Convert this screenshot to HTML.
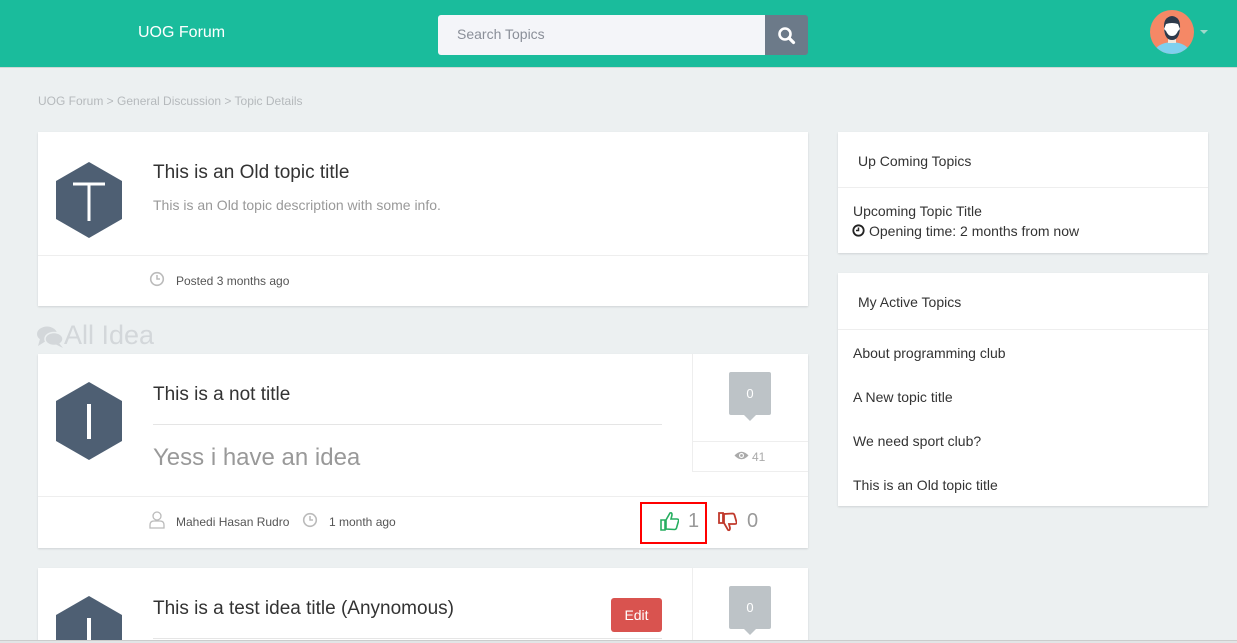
<!DOCTYPE html>
<html style="width:1237px;height:643px;overflow:hidden"><head><meta charset="utf-8"><style>
*{margin:0;padding:0;box-sizing:border-box}
body{width:1237px;height:643px;overflow:hidden;background:#ecf0f1;font-family:"Liberation Sans",sans-serif;position:relative}
.a{position:absolute}
.card{position:absolute;background:#fff;box-shadow:0 1px 2px rgba(0,0,0,.12)}
.t{font-family:"Liberation Sans",sans-serif}
</style></head><body>
<div class="a" style="left:0;top:0;width:1237px;height:68px;background:#1abc9c;border-bottom:1px solid #cfd8d6"></div>
<div class="a" style="left:138px;top:24px;color:#fff;font-size:16px">UOG Forum</div>
<div class="a" style="left:438px;top:15px;width:328px;height:40px;background:#f4f5f9;border-radius:3px 0 0 3px"></div>
<div class="a" style="left:457px;top:26px;color:#8a8f99;font-size:14px">Search Topics</div>
<div class="a" style="left:765px;top:15px;width:43px;height:40px;background:#6c7a89;border-radius:0 3px 3px 0"></div>
<svg class="a" style="left:777px;top:26px" width="19" height="19" viewBox="0 0 19 19"><circle cx="8" cy="8" r="5.5" fill="none" stroke="#fff" stroke-width="2.6"/><path d="M12 12l4.5 4.5" stroke="#fff" stroke-width="3.2" stroke-linecap="round"/></svg>
<svg class="a" style="left:1149px;top:9px" width="46" height="46" viewBox="0 0 46 46"><defs><clipPath id="c"><circle cx="23" cy="23" r="22"/></clipPath></defs><circle cx="23" cy="23" r="22" fill="#f58866"/><g clip-path="url(#c)"><path d="M4 46 Q6 34 23 33 Q40 34 42 46Z" fill="#7fd0ef"/><rect x="19" y="26" width="8" height="8" fill="#f2e7dc"/><ellipse cx="23" cy="20" rx="8" ry="10" fill="#fff"/><path d="M15 20 Q14 8 23 7 Q32 8 31 20 L29 15 Q23 13 17 15Z" fill="#2d3a4b"/><path d="M15 20 Q16 31 23 31 Q30 31 31 20 L29 22 Q27 27 23 27 Q19 27 17 22Z" fill="#2d3a4b"/></g></svg>
<div class="a" style="left:1200px;top:30px;width:0;height:0;border-left:4px solid transparent;border-right:4px solid transparent;border-top:4px solid #9fd9cb"></div>

<div class="a" style="left:38px;top:94px;color:#b5b9bc;font-size:12px">UOG Forum &gt; General Discussion &gt; Topic Details</div>

<div class="card" style="left:38px;top:132px;width:770px;height:174px"></div>
<svg class="a" style="left:56px;top:162px" width="66" height="76" viewBox="0 0 66 76"><polygon points="33,0 66,19 66,57 33,76 0,57 0,19" fill="#4e5f73"/><path d="M17 22h32M33 22v37" stroke="#fff" stroke-width="3"/></svg>
<div class="a t" style="left:153px;top:162px;font-size:19px;color:#333">This is an Old topic title</div>
<div class="a" style="left:153px;top:197px;font-size:14px;color:#999">This is an Old topic description with some info.</div>
<div class="a" style="left:38px;top:255px;width:770px;height:1px;background:#eee"></div>
<svg class="a" style="left:149px;top:271px" width="16" height="16" viewBox="0 0 16 16"><circle cx="8" cy="8" r="6.3" fill="none" stroke="#bbb" stroke-width="1.6"/><path d="M8 4v4h3" fill="none" stroke="#bbb" stroke-width="1.5"/></svg>
<div class="a" style="left:176px;top:274px;font-size:12px;color:#555">Posted 3 months ago</div>

<svg class="a" style="left:37px;top:325px" width="28" height="24" viewBox="0 0 28 24"><ellipse cx="10" cy="9" rx="10" ry="7.5" fill="#d3d7da"/><path d="M3 14 L1 21 L9 16Z" fill="#d3d7da"/><ellipse cx="17" cy="14" rx="9" ry="6.5" fill="#d3d7da" stroke="#ecf0f1" stroke-width="1.5"/><path d="M22 18 L26 23 L18 19Z" fill="#d3d7da"/></svg>
<div class="a" style="left:64px;top:320px;font-size:27px;color:#d3d7da">All Idea</div>

<div class="card" style="left:38px;top:354px;width:770px;height:194px"></div>
<svg class="a" style="left:56px;top:382px" width="66" height="78" viewBox="0 0 66 78"><polygon points="33,0 66,19 66,59 33,78 0,59 0,19" fill="#4e5f73"/><rect x="31" y="22" width="4" height="35" fill="#fff"/></svg>
<div class="a t" style="left:153px;top:384px;font-size:19px;color:#333">This is a not title</div>
<div class="a" style="left:153px;top:424px;width:509px;height:1px;background:#e5e5e5"></div>
<div class="a t" style="left:153px;top:444px;font-size:24px;color:#999">Yess i have an idea</div>
<div class="a" style="left:692px;top:354px;width:1px;height:117px;background:#eee"></div>
<div class="a" style="left:692px;top:441px;width:116px;height:1px;background:#eee"></div>
<div class="a" style="left:692px;top:471px;width:116px;height:1px;background:#eee"></div>
<div class="a" style="left:729px;top:372px;width:42px;height:43px;background:#bdc3c7;border-radius:2px;color:#fff;font-size:13px;text-align:center;line-height:43px">0</div>
<div class="a" style="left:744px;top:415px;border-left:6px solid transparent;border-right:6px solid transparent;border-top:6px solid #bdc3c7"></div>
<svg class="a" style="left:734px;top:450px" width="15" height="11" viewBox="0 0 15 11"><path d="M0.5 5.5Q7.5 -2 14.5 5.5Q7.5 13 0.5 5.5Z" fill="#aaa"/><circle cx="7.5" cy="5.5" r="2.5" fill="#fff"/><circle cx="7.5" cy="5.5" r="1.4" fill="#aaa"/></svg>
<div class="a" style="left:752px;top:450px;font-size:12px;color:#aaa">41</div>
<div class="a" style="left:38px;top:496px;width:770px;height:1px;background:#eee"></div>
<svg class="a" style="left:149px;top:511px" width="16" height="18" viewBox="0 0 16 18"><circle cx="8" cy="5" r="4" fill="none" stroke="#bbb" stroke-width="1.3"/><path d="M1 17v-3q0-4 4-4h6q4 0 4 4v3z" fill="none" stroke="#bbb" stroke-width="1.3"/></svg>
<div class="a" style="left:176px;top:515px;font-size:12px;color:#555">Mahedi Hasan Rudro</div>
<svg class="a" style="left:302px;top:512px" width="16" height="16" viewBox="0 0 16 16"><circle cx="8" cy="8" r="6.3" fill="none" stroke="#bbb" stroke-width="1.6"/><path d="M8 4v4h3" fill="none" stroke="#bbb" stroke-width="1.5"/></svg>
<div class="a" style="left:329px;top:515px;font-size:12px;color:#555">1 month ago</div>
<div class="a" style="left:640px;top:502px;width:67px;height:42px;border:2px solid #f00"></div>
<svg class="a" style="left:660px;top:511px" width="19" height="20" viewBox="0 0 19 20"><path d="M1 9h4v10H1z M6 18V9l4-7q2-1 2 2l-1 4h6q2 0 1.5 2l-2 7q-.5 1.5-2 1.5z" fill="none" stroke="#27ae60" stroke-width="1.6"/></svg>
<div class="a" style="left:688px;top:510px;font-size:20px;color:#999">1</div>
<svg class="a" style="left:718px;top:512px" width="19" height="20" viewBox="0 0 19 20"><path d="M1 1h4v10H1z M6 2v9l4 7q2 1 2-2l-1-4h6q2 0 1.5-2l-2-7q-.5-1.5-2-1.5z" fill="none" stroke="#c0392b" stroke-width="1.8"/></svg>
<div class="a" style="left:747px;top:510px;font-size:20px;color:#999">0</div>

<div class="card" style="left:38px;top:568px;width:770px;height:75px"></div>
<div class="a" style="left:56px;top:596px;width:66px;height:44px;overflow:hidden"><svg width="66" height="78" viewBox="0 0 66 78"><polygon points="33,0 66,19 66,59 33,78 0,59 0,19" fill="#4e5f73"/><rect x="31" y="22" width="4" height="35" fill="#fff"/></svg></div>
<div class="a t" style="left:153px;top:598px;font-size:19px;color:#333">This is a test idea title (Anynomous)</div>
<div class="a" style="left:611px;top:598px;width:51px;height:34px;background:#d9534f;border-radius:3px;color:#fff;font-size:14px;text-align:center;line-height:34px">Edit</div>
<div class="a" style="left:153px;top:638px;width:509px;height:1px;background:#e5e5e5"></div>
<div class="a" style="left:692px;top:568px;width:1px;height:75px;background:#eee"></div>
<div class="a" style="left:729px;top:586px;width:42px;height:43px;background:#bdc3c7;border-radius:2px;color:#fff;font-size:13px;text-align:center;line-height:43px">0</div>
<div class="a" style="left:744px;top:629px;border-left:6px solid transparent;border-right:6px solid transparent;border-top:6px solid #bdc3c7"></div>
<div class="a" style="left:0;top:640px;width:1237px;height:3px;background:#e2e5e6;border-top:1px solid #ccc"></div>

<div class="card" style="left:838px;top:132px;width:370px;height:121px"></div>
<div class="a" style="left:858px;top:153px;font-size:14px;color:#333">Up Coming Topics</div>
<div class="a" style="left:838px;top:187px;width:370px;height:1px;background:#eee"></div>
<div class="a" style="left:853px;top:203px;font-size:14px;color:#333">Upcoming Topic Title</div>
<svg class="a" style="left:852px;top:224px" width="13" height="13" viewBox="0 0 13 13"><circle cx="6.5" cy="6.5" r="5.2" fill="none" stroke="#222" stroke-width="1.8"/><path d="M6.5 3.5v3h-2.5" fill="none" stroke="#222" stroke-width="1.5"/></svg>
<div class="a" style="left:869px;top:223px;font-size:14px;color:#333">Opening time: 2 months from now</div>

<div class="card" style="left:838px;top:273px;width:370px;height:233px"></div>
<div class="a" style="left:858px;top:294px;font-size:14px;color:#333">My Active Topics</div>
<div class="a" style="left:838px;top:329px;width:370px;height:1px;background:#eee"></div>
<div class="a" style="left:853px;top:345px;font-size:14px;color:#333">About programming club</div>
<div class="a" style="left:853px;top:389px;font-size:14px;color:#333">A New topic title</div>
<div class="a" style="left:853px;top:433px;font-size:14px;color:#333">We need sport club?</div>
<div class="a" style="left:853px;top:477px;font-size:14px;color:#333">This is an Old topic title</div>
</body></html>
